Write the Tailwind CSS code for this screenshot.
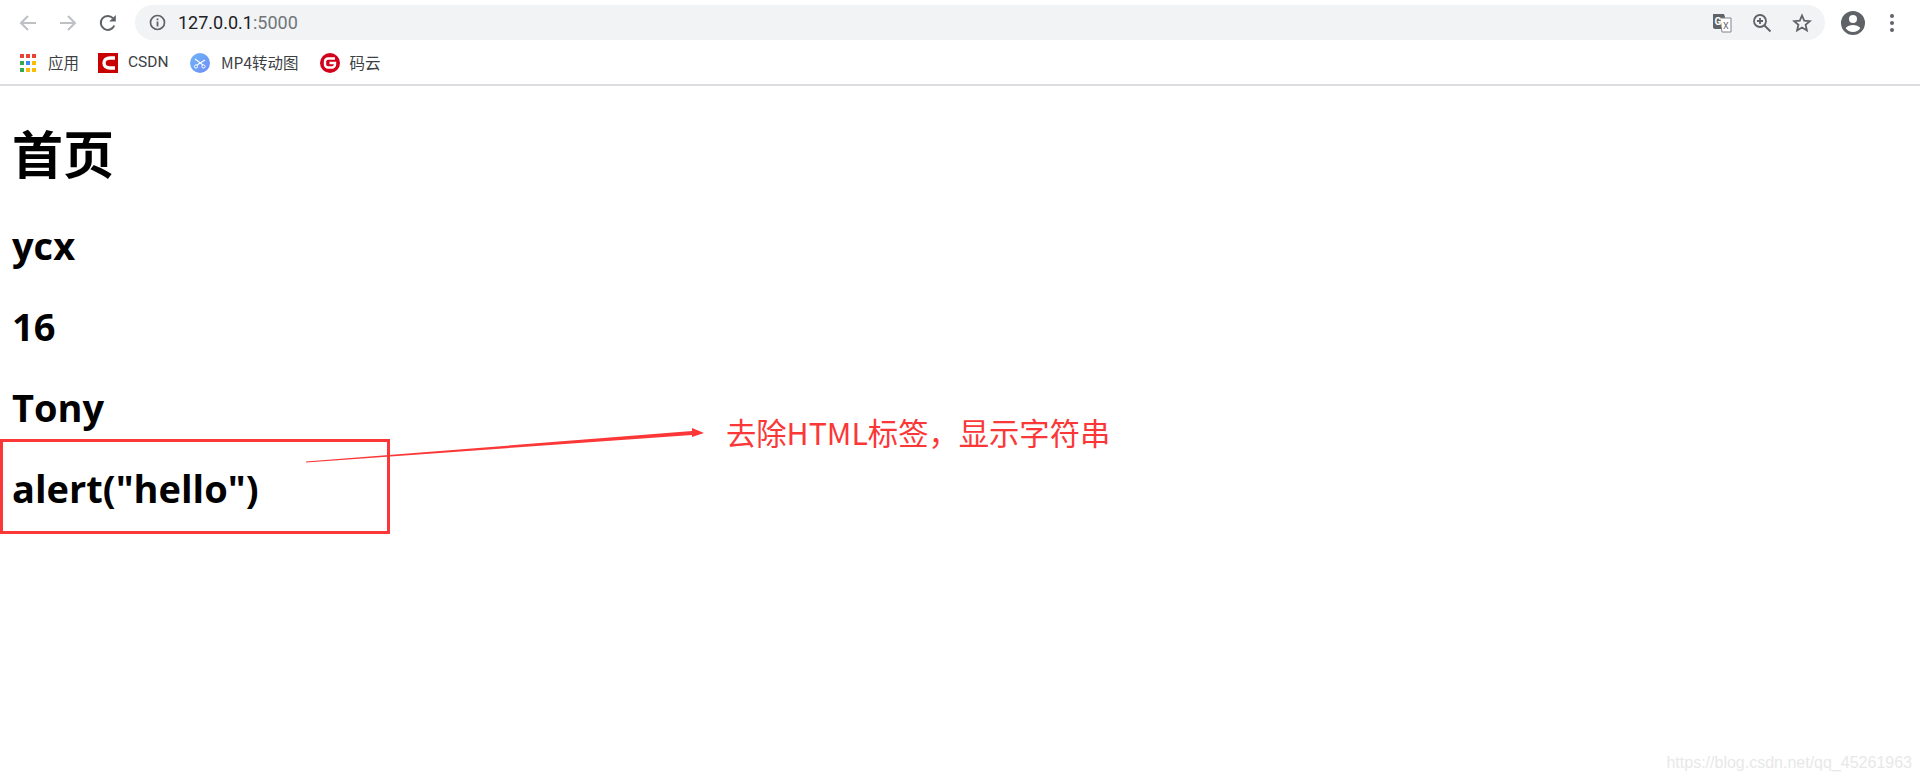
<!DOCTYPE html>
<html lang="zh-CN">
<head>
  <meta charset="UTF-8" />
  <title>127.0.0.1:5000</title>
  <script src="https://cdn.jsdelivr.net/npm/@tailwindcss/browser@4"></script>
</head>
<body class="relative h-[783px] overflow-hidden bg-white text-black font-['Open_Sans','Noto_Sans_CJK_SC',sans-serif]">

  <!-- Browser toolbar -->
  <div class="flex h-[45px] items-center">
    <svg class="ml-[18px] w-[20px] h-[20px]" viewBox="0 0 20 20" fill="none" stroke="#bdc1c6" stroke-width="2"><path d="M18 10H3M10 3l-7 7 7 7"/></svg>
    <svg class="ml-[20px] w-[20px] h-[20px]" viewBox="0 0 20 20" fill="none" stroke="#bdc1c6" stroke-width="2"><path d="M2 10h15M10 3l7 7-7 7"/></svg>
    <svg class="ml-[20px] w-[20px] h-[20px]" viewBox="0 0 20 20"><path fill="none" stroke="#5f6368" stroke-width="2" d="M16.3 12.5A7 7 0 1 1 15 5.2"/><path fill="#5f6368" d="M17.8 2v6.600h-6.600z"/></svg>

    <!-- Omnibox -->
    <div class="ml-[17px] flex h-[35px] w-[1690px] items-center rounded-full bg-[#f1f3f4]">
      <svg class="ml-[14px] w-[17px] h-[17px]" viewBox="0 0 17 17"><circle cx="8.5" cy="8.5" r="7" fill="none" stroke="#5f6368" stroke-width="1.7"/><path fill="#5f6368" d="M7.600 7.500h1.800v5H7.600zM7.600 4.500h1.800v1.800H7.600z"/></svg>
      <span class="ml-[12px] text-[18px] font-['Roboto'] text-[#202124]">127.0.0.1<span class="text-[#70757a]">:5000</span></span>

      <svg class="ml-auto w-[20px] h-[20px]" viewBox="0 0 20 20"><path fill="#5f6368" d="M1 1h11l1 3v12H3a2 2 0 0 1-2-2z"/><path fill="#fff" stroke="#80868b" d="M8 5h11v14H10z"/><text x="2.500" y="12" font-size="10" font-weight="700" font-family="Roboto" fill="#fff">G</text><text x="11" y="16" font-size="9" font-family="Roboto" fill="#5f6368">X</text></svg>
      <svg class="ml-[20px] w-[20px] h-[20px]" viewBox="0 0 20 20" fill="none" stroke="#5f6368" stroke-width="1.8"><circle cx="8" cy="8" r="6"/><path d="M12.500 12.500l6 6M5 8h6M8 5v6"/></svg>
      <svg class="ml-[20px] w-[20px] h-[20px]" viewBox="0 0 20 20" fill="none" stroke="#5f6368" stroke-width="1.8"><path d="M10 2.500l2.200 5.200 5.600.5-4.200 3.700 1.300 5.500-4.900-2.900-4.900 2.900 1.300-5.500-4.200-3.700 5.600-.5z"/></svg>
      <div class="w-[13px]"></div>
    </div>

    <svg class="ml-[16px] w-[24px] h-[24px]" viewBox="0 0 24 24"><path fill="#5f6368" fill-rule="evenodd" d="M12 0a12 12 0 1 0 0 24 12 12 0 0 0 0-24zm0 4a4 4 0 1 1 0 8 4 4 0 0 1 0-8zm0 17a9 9 0 0 1-7.400-3.900c1.700-2.300 4.600-3.100 7.400-3.100s5.700.8 7.400 3.100A9 9 0 0 1 12 21z"/></svg>
    <div class="ml-[25px] flex flex-col gap-[3px]">
      <span class="w-[4px] h-[4px] rounded-full bg-[#5f6368]"></span>
      <span class="w-[4px] h-[4px] rounded-full bg-[#5f6368]"></span>
      <span class="w-[4px] h-[4px] rounded-full bg-[#5f6368]"></span>
    </div>
  </div>

  <!-- Bookmarks bar -->
  <div class="flex h-[41px] items-center border-b-2 border-[#dadce0] pb-[4px] text-[15.5px] text-[#3c4043] font-['Noto_Sans_CJK_SC',sans-serif]">
    <svg class="ml-[20px] w-[16px] h-[18px]" viewBox="0 0 16 18">
      <path fill="#ea4335" d="M0 0h4v4H0zM6 0h4v4H6zM12 0h4v4h-4z"/>
      <path fill="#34a853" d="M0 7h4v4H0z"/><path fill="#4285f4" d="M6 7h4v4H6z"/><path fill="#fbbc05" d="M12 7h4v4h-4z"/>
      <path fill="#34a853" d="M0 14h4v4H0z"/><path fill="#fbbc05" d="M6 14h4v4H6zM12 14h4v4h-4z"/>
    </svg>
    <span class="ml-[12px] w-[31px]">应用</span>

    <svg class="ml-[19px] w-[20px] h-[20px]" viewBox="0 0 20 20"><path fill="#c90000" d="M0 0h20v20H0z"/><path fill="none" stroke="#fff" stroke-width="3.400" d="M17 5h-5c-3.500 0-6 2-6 5s2.500 5 6 5h5"/></svg>
    <span class="ml-[10px] font-['Roboto'] w-[43px]">CSDN</span>

    <svg class="ml-[19px] w-[20px] h-[20px]" viewBox="0 0 20 20"><defs><linearGradient id="mp4" x1="0" y1="0" x2="1" y2="1"><stop offset="0" stop-color="#6fb5f5"/><stop offset="1" stop-color="#6f8cf8"/></linearGradient></defs><circle cx="10" cy="10" r="10" fill="url(#mp4)"/><path fill="none" stroke="#fff" stroke-width="1.100" d="M5 6l8 6M15 7l-8 5"/><circle cx="6" cy="13.500" r="1.600" fill="none" stroke="#fff"/><circle cx="13.500" cy="13.500" r="1.600" fill="none" stroke="#fff"/></svg>
    <span class="ml-[11px]">MP4转动图</span>

    <svg class="ml-[21px] w-[20px] h-[20px]" viewBox="0 0 20 20"><circle cx="10" cy="10" r="10" fill="#d3001b"/><path fill="none" stroke="#fff" stroke-width="2.400" d="M15 5.500H8a3 3 0 0 0-3 3v3a3 3 0 0 0 3 3h4a3 3 0 0 0 3-3V10H9.500"/></svg>
    <span class="ml-[10px]">码云</span>
  </div>

  <!-- Page content -->
  <div class="px-[12px] pt-[34px] font-bold">
    <h1 class="text-[51px] leading-[65px] mb-[35px] font-['Noto_Sans_CJK_SC',sans-serif]">首页</h1>
    <h2 class="text-[38px] leading-[50px] mb-[31px]">ycx</h2>
    <h2 class="text-[38px] leading-[50px] mb-[31px]">16</h2>
    <h2 class="text-[38px] leading-[50px] mb-[31px]">Tony</h2>
    <h2 class="text-[38px] leading-[50px]">alert("hello")</h2>
  </div>

  <!-- Red annotation -->
  <div class="absolute left-0 top-[439px] w-[390px] h-[95px] border-[3px] border-[#fb3737]"></div>
  <svg class="absolute left-0 top-0 w-[720px] h-[520px]" viewBox="0 0 720 520"><path fill="#fb3737" d="M306 461.500L692 431 692 428 704 433 692 437 692 435 306 462.500z"/></svg>
  <span class="absolute left-[726px] top-[410px] text-[30.3px] leading-[44px] text-[#fb3737] font-['Noto_Sans_CJK_SC',sans-serif]">去除HTML标签，显示字符串</span>

  <span class="absolute right-[8px] bottom-[8px] text-[16px] text-[#e8e8e8] font-['Liberation_Sans']">https://blog.csdn.net/qq_45261963</span>
</body>
</html>
